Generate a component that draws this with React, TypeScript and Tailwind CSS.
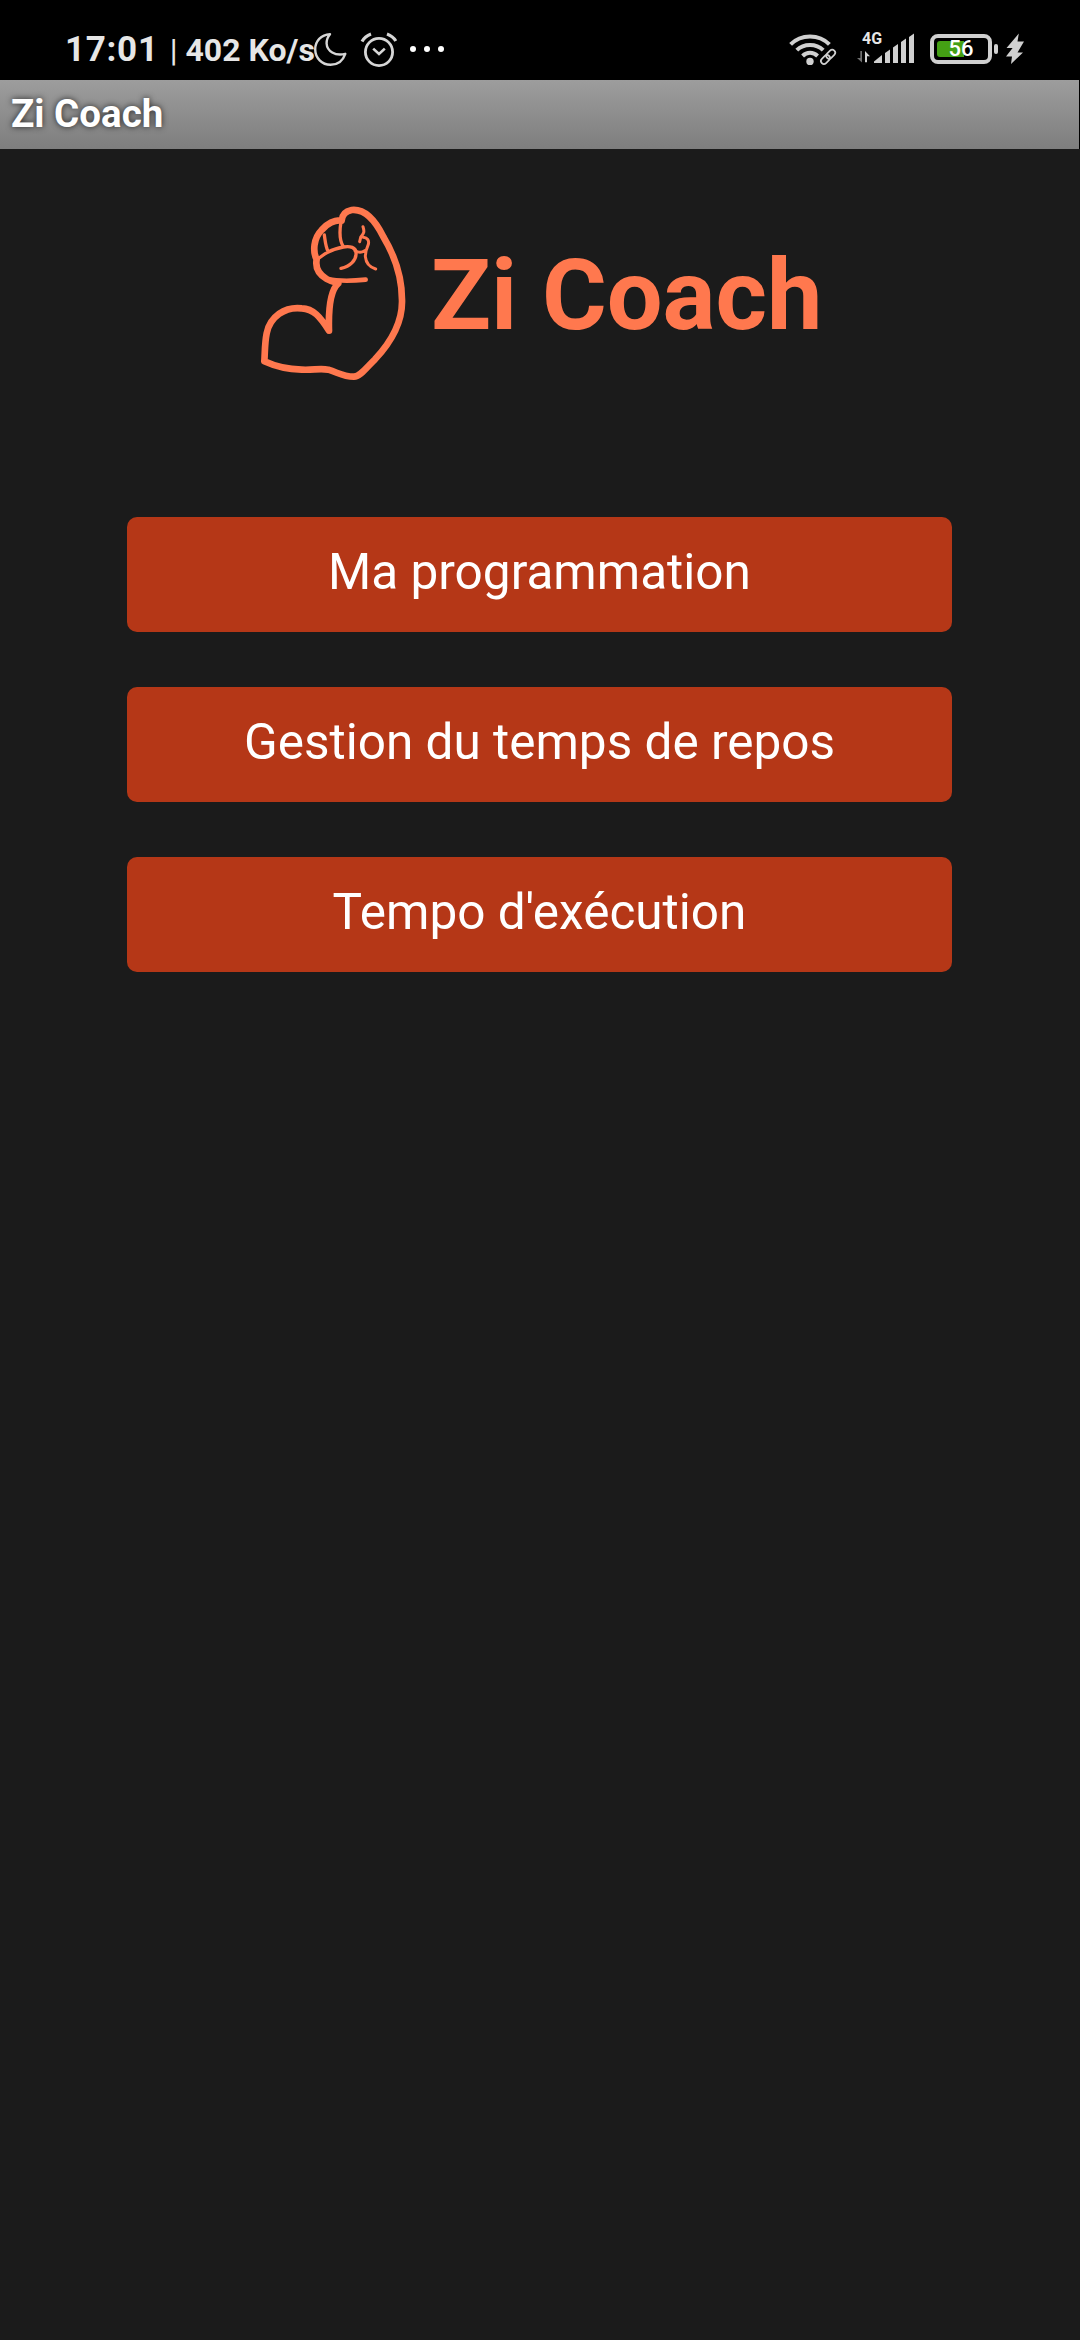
import React from "react";

function Moon() {
  return (
    <svg className="absolute left-[313px] top-[31px]" width="36" height="36" viewBox="313 31 36 36" fill="none" stroke="#d6d6d6" strokeWidth="2.4" strokeLinejoin="round">
      <path d="M330 34.2C321 34.5 315.2 41.5 315.2 49.3C315.2 58 322 64.8 330.5 64.8C337.5 64.8 343 60.5 345.3 53.8C335 56.5 327 51 326.6 43.5C326.5 39.8 328 36.5 330 34.2Z" />
    </svg>
  );
}

function Alarm() {
  return (
    <svg className="absolute left-[360px] top-[31px]" width="38" height="38" viewBox="360 31 38 38" fill="none" stroke="#d6d6d6" strokeWidth="2.8">
      <circle cx="379" cy="52" r="13.6" />
      <path d="M373.2 48.6L379 54L384.8 48.6" strokeWidth="2.6" />
      <path d="M362 41.5C364 38 367 35.5 371 34M387 34C391 35.5 394 38 395.8 41" strokeWidth="3.2" />
    </svg>
  );
}

function Wifi() {
  return (
    <svg className="absolute left-[786px] top-[30px]" width="52" height="38" viewBox="786 30 52 38" fill="none" stroke="#d0d0d0">
      <path d="M790.6 44.4C801 33.8 819 33.8 829.4 44.4" strokeWidth="4" />
      <path d="M796.8 50.2C803.8 43.2 816.2 43.2 823.2 50.2" strokeWidth="4" />
      <path d="M802.6 56C806.8 51.8 813.2 51.8 817.6 56" strokeWidth="4" />
      <circle cx="810" cy="61.4" r="3.7" fill="#d0d0d0" stroke="none" />
      <g transform="rotate(-45 828 57)" strokeWidth="1.7">
        <rect x="819.3" y="54" width="10.2" height="6" rx="3" />
        <rect x="826.7" y="54" width="10.2" height="6" rx="3" />
      </g>
    </svg>
  );
}

function Signal() {
  return (
    <svg className="absolute left-[856px] top-[32px]" width="60" height="32" viewBox="856 32 60 32" fill="#d0d0d0">
      <path d="M874 63V61.5L882 55V63Z" />
      <path d="M885 63V53L890 49.5V63Z" />
      <path d="M893 63V47.5L898 44V63Z" />
      <path d="M901 63V42L906 38.5V63Z" />
      <path d="M909 63V37L914 33.5V63Z" />
      <path d="M860.3 51H862V62.5L857 58H860.3Z" fill="#6e6e6e" />
      <path d="M865 62.3V51L870 56.2H867V62.3Z" />
    </svg>
  );
}

function Battery() {
  return (
    <div className="absolute left-[930px] top-[34px] h-[30px] w-[62px] rounded-[8px] border-4 border-[#d0d0d0]">
      <div className="absolute left-[3px] top-[3px] h-[16px] w-[27px] rounded-l-[3px] bg-[#44a014]" />
      <div className="absolute inset-0 flex items-center justify-center text-[22px] font-medium leading-none text-white">56</div>
      <div className="absolute left-[60px] top-[6px] h-[10px] w-[4px] rounded-[2px] bg-[#d0d0d0]" />
    </div>
  );
}

function StatusBar() {
  return (
    <header className="relative h-20 bg-black text-[#e6e6e6]">
      <div className="flex h-full items-baseline pl-[65px] pt-[29px] whitespace-pre leading-[42px]">
        <span className="text-[35px] font-bold tracking-[0.7px]">17:01</span>
        <span className="ml-[11px] text-[32px]">|</span>
        <span className="ml-[8px] text-[32px] font-bold">402 Ko/s</span>
      </div>
      <Moon />
      <Alarm />
      <div className="absolute left-[410px] top-[46px] flex gap-[8px]">
        <i className="size-[6px] rounded-full bg-white" />
        <i className="size-[6px] rounded-full bg-white" />
        <i className="size-[6px] rounded-full bg-white" />
      </div>
      <Wifi />
      <span className="absolute left-[862px] top-[30px] text-[16px] leading-[18px] font-bold">4G</span>
      <Signal />
      <Battery />
      <svg className="absolute left-[1005px] top-[33px]" width="20" height="32" viewBox="1005 33 20 32" fill="#d0d0d0">
        <path d="M1018.8 33.5L1006.5 48H1012.6L1006 56.5H1012L1011 64L1023 52.5H1017.5L1024 41.5H1017.5Z" />
      </svg>
    </header>
  );
}

function ArmLogo() {
  return (
    <svg width="150" height="180" viewBox="0 0 450 540" fill="none" stroke="#ff784e" strokeLinecap="round" strokeLinejoin="round">
      <path strokeWidth="20" d="M245 62C225 58 200 72 185 90C160 115 158 155 170 178C165 205 180 225 200 237C212 244 224 247 235 250C212 270 205 325 207 392C180 350 160 326 125 325C75 319 30 350 20 400C14 430 15 455 13 484C45 499 80 508 125 509C160 511 178 504 205 509C235 518 248 530 282 530C300 530 320 502 345 478C385 435 428 370 426 300C426 220 400 160 370 110C350 70 320 25 275 30C255 34 246 46 245 62Z" />
      <path strokeWidth="14" d="M200 237C235 244 270 244 317 239" />
      <path strokeWidth="10" d="M193 105C196 125 197 142 205 156M243 65C238 95 237 120 250 140M170 178C178 176 190 162 205 156C220 148 235 144 250 141C270 137 288 142 288 158C290 180 270 200 243 205" />
      <path strokeWidth="9" d="M309 80C314 95 312 100 302 112L299 125M310 112C322 114 328 120 325 133C320 144 316 152 316 170C318 190 330 202 347 207M285 152C295 158 305 158 314 152" />
    </svg>
  );
}

const actions = ["Ma programmation", "Gestion du temps de repos", "Tempo d'exécution"];

export default function App() {
  return (
    <div className="flex h-[2340px] w-[1080px] flex-col bg-[#1b1b1b] font-['Roboto',sans-serif]">
      <StatusBar />
      <div className="bg-black pr-px">
        <div className="flex h-[69px] items-center bg-linear-to-b from-[#9d9d9d] to-[#7e7e7e] pl-[11px]">
          <h1 className="text-[38.5px] leading-none font-bold text-white [text-shadow:0_0_6px_rgba(0,0,0,0.75)]">Zi Coach</h1>
        </div>
      </div>
      <main className="flex flex-col">
        <div className="flex pl-[260px] pt-[51px]">
          <ArmLogo />
          <h2 className="ml-[21px] mt-[37px] text-[99px] leading-[116px] font-bold whitespace-nowrap text-[#ff784e]">Zi Coach</h2>
        </div>
        <nav className="mt-[137px] ml-[127px] flex w-[825px] flex-col gap-[55px]">
          {actions.map((label) => (
            <button key={label} className="flex h-[115px] justify-center rounded-[10px] bg-[#b53717] pt-[26px] text-[49.5px] leading-[58px] text-white">
              {label}
            </button>
          ))}
        </nav>
      </main>
    </div>
  );
}
